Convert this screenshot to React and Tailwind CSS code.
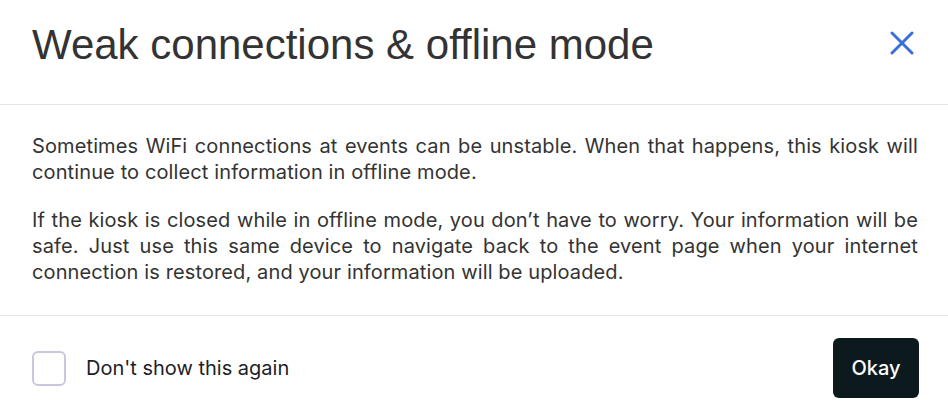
export default function App() {
  return (
    <div className="w-[948px] h-[420px] bg-white flex flex-col font-['Inter',sans-serif]">
      {/* header */}
      <div className="flex items-start justify-between pl-8 pr-[34px] pt-[21px] pb-[35px] border-b border-[#e6e6e6]">
        <h2 className="text-[42px] leading-[48px] text-[#333333] font-['Liberation_Sans',Arial,sans-serif]">
          Weak connections &amp; offline mode
        </h2>
        <button type="button" className="mt-[10px] w-6 h-6 text-[#3a6fd8]" aria-label="Close">
          <svg viewBox="0 0 24 24" width="24" height="24" fill="none" stroke="currentColor" strokeWidth="3" strokeLinecap="round">
            <path d="M2 2 L22 22 M22 2 L2 22" />
          </svg>
        </button>
      </div>

      {/* body */}
      <div className="flex flex-col gap-[22px] pl-8 pr-[30px] pt-[28px] pb-[30px] border-b border-[#e6e6e6] text-[20px] leading-[26px] tracking-[0.12px] text-[#333333] text-justify">
        <p>
          Sometimes WiFi connections at events can be unstable. When that happens, this kiosk will
          continue to collect information in offline mode.
        </p>
        <p>
          If the kiosk is closed while in offline mode, you don’t have to worry. Your information will be
          safe. Just use this same device to navigate back to the event page when your internet
          connection is restored, and your information will be uploaded.
        </p>
      </div>

      {/* footer */}
      <div className="flex-1 flex items-center justify-between pl-8 pr-[29px]">
        <label className="flex items-center gap-5 cursor-pointer">
          <span className="w-[34px] h-[35px] rounded-md border-2 border-[#c9c7df] bg-white" />
          <span className="text-[20px] text-[#1d1d27]">Don't show this again</span>
        </label>
        <button
          type="button"
          className="w-[86px] h-[60px] rounded-md bg-[#0c1a1d] text-white text-[20px] font-medium"
        >
          Okay
        </button>
      </div>
    </div>
  );
}
